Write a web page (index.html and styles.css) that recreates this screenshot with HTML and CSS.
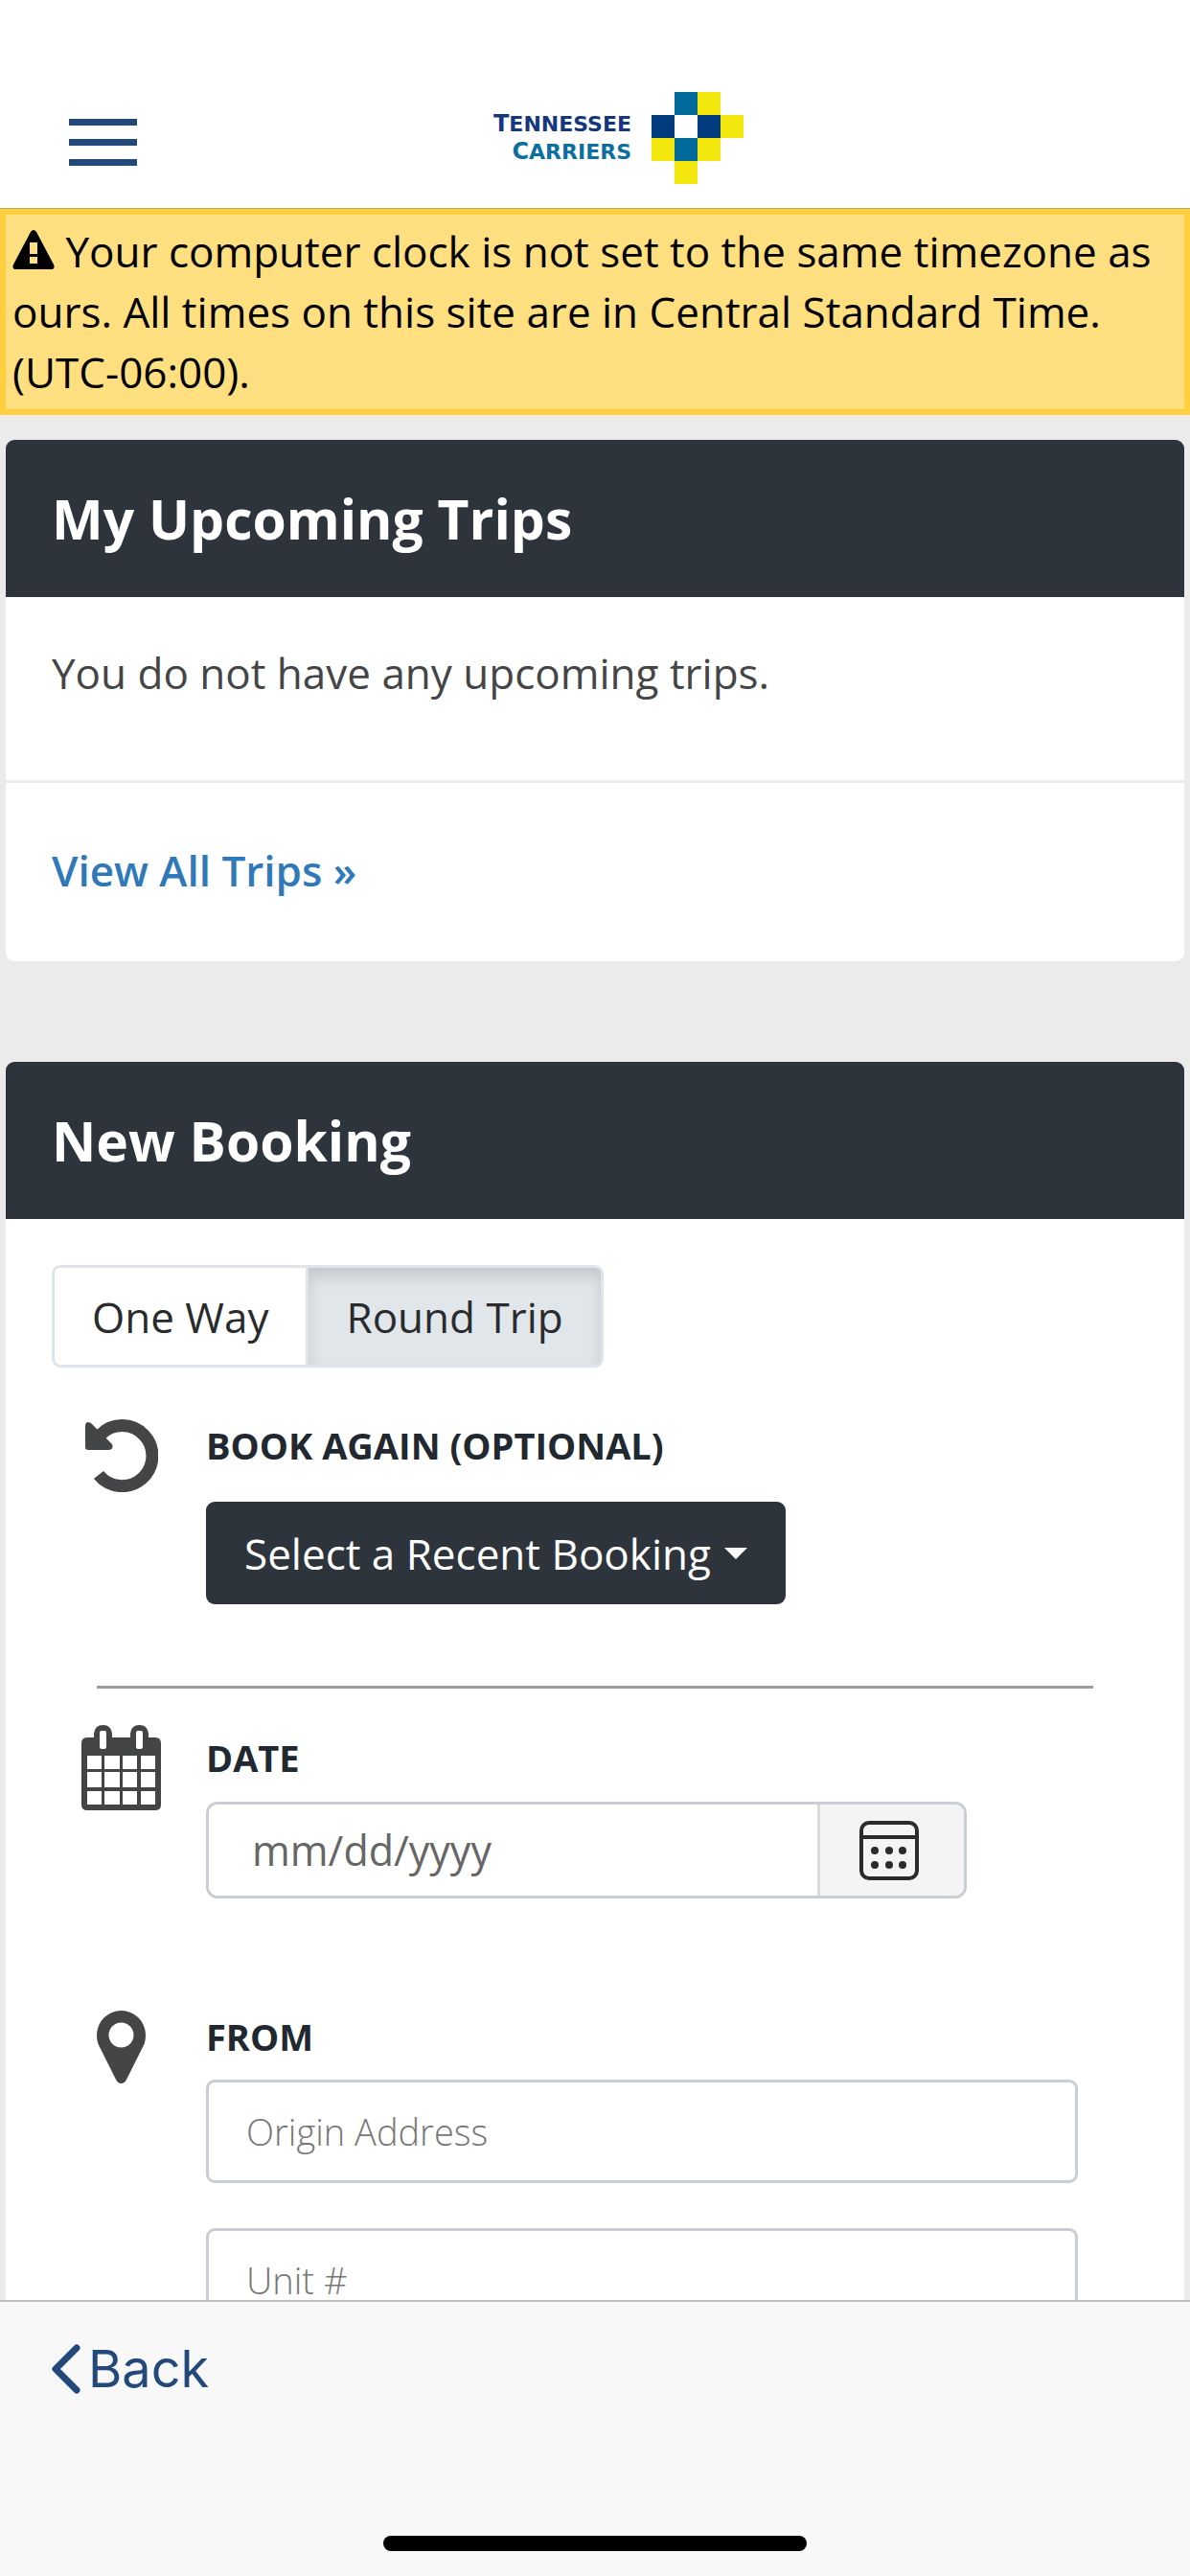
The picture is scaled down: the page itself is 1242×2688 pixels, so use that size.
FILE: index.html
```html
<!DOCTYPE html>
<html lang="en">

<head>
    <meta charset="UTF-8">
    <meta name="viewport" content="width=device-width, initial-scale=1.0">
    <title>Tennessee Carriers</title>
    <link rel="stylesheet" href="styles.css">
</head>

<body>
    <header class="topbar">
        <button class="menu-btn" type="button" aria-label="Menu">
            <span></span>
            <span></span>
            <span></span>
        </button>
        <a class="logo" href="#">
            <span class="logo-text">
                <span class="logo-line"><b>T</b>ENNESSEE</span>
                <span class="logo-line teal"><b>C</b>ARRIERS</span>
            </span>
            <svg class="logo-mark" viewBox="0 0 96 96" aria-hidden="true">
                <path fill="#f3e70d" d="M48 0h24v24H48zM72 24h24v24H72zM0 48h24v24H0zM48 48h24v24H48zM24 72h24v24H24z"/>
                <path fill="#006a9b" d="M24 0h24v24H24zM24 48h24v24H24z"/>
                <path fill="#003c7d" d="M0 24h24v24H0zM48 24h24v24H48z"/>
            </svg>
        </a>
    </header>

    <main class="content">
        <div class="alert">
            <svg class="alert-icon" viewBox="0 0 44 41" aria-hidden="true">
                <path fill-rule="evenodd" d="M19 2q3-4 6 0l18 34q2 5-3 5H4q-5 0-3-5zM18 13v12h8V13zM18 28v7h8v-7z"/>
            </svg>
            Your computer clock is not set to the same timezone as ours. All times on this site are in Central Standard Time. (UTC-06:00).
        </div>

        <section class="card">
            <h2 class="card-title">My Upcoming Trips</h2>
            <p class="card-text">You do not have any upcoming trips.</p>
            <div class="card-footer"><a href="#">View All Trips »</a></div>
        </section>

        <section class="card">
            <h2 class="card-title">New Booking</h2>
            <form class="booking">
                <div class="toggle">
                    <button type="button">One Way</button>
                    <button type="button" class="active">Round Trip</button>
                </div>

                <div class="row row-again">
                    <svg class="icon" width="76" height="76" viewBox="0 0 76 76" aria-hidden="true">
                        <path d="M16 16A31.500 31.500 0 1 1 14 58" fill="none" stroke="#444546" stroke-width="13"/>
                        <path d="M0 6q1-5 6-2l22 22q2 5-3 6H3q-3 0-3-3z" fill="#444546"/>
                    </svg>
                    <div class="field">
                        <label for="recent">Book Again (Optional)</label>
                        <button class="dropdown" id="recent" type="button">Select a Recent Booking<span class="caret"></span></button>
                    </div>
                </div>

                <hr>

                <div class="row row-date">
                    <svg class="icon" width="83" height="89" viewBox="0 0 83 89" aria-hidden="true">
                        <path fill="#444546" fill-rule="evenodd" d="M6 13h7v-4q1-9 9.500-9T32 9v4h19V9q1-9 9.500-9T70 9v4h7q6 0 6 6v64q0 6-6 6H6q-6 0-6-6V19q0-6 6-6zM19 8v15q0 2 2 2h3q2 0 2-2V8q0-2-2-2h-3q-2 0-2 2zM57 8v15q0 2 2 2h3q2 0 2-2V8q0-2-2-2h-3q-2 0-2 2zM6 32v14h15V32zM24 32v14h16V32zM43 32v14h15V32zM62 32v14h15V32zM6 49v16h15V49zM24 49v16h16V49zM43 49v16h15V49zM62 49v16h15V49zM6 69v14h15V69zM24 69v14h16V69zM43 69v14h15V69zM62 69v14h15V69z"/>
                    </svg>
                    <div class="field">
                        <label for="date">Date</label>
                        <div class="date-group">
                            <input id="date" type="text" placeholder="mm/dd/yyyy">
                            <button type="button" aria-label="Open calendar">
                                <svg width="62" height="62" viewBox="0 0 62 62" fill="none" stroke="#292b2c" stroke-width="4" aria-hidden="true">
                                    <rect x="2" y="2" width="58" height="58" rx="8"/>
                                    <path d="M2 17h58"/>
                                    <g fill="#292b2c" stroke="none">
                                        <circle cx="16" cy="31" r="4"/>
                                        <circle cx="31" cy="31" r="4"/>
                                        <circle cx="45" cy="31" r="4"/>
                                        <circle cx="16" cy="46" r="4"/>
                                        <circle cx="31" cy="46" r="4"/>
                                        <circle cx="45" cy="46" r="4"/>
                                    </g>
                                </svg>
                            </button>
                        </div>
                    </div>
                </div>

                <div class="row row-from">
                    <svg class="icon" width="51" height="76" viewBox="0 0 51 76" aria-hidden="true">
                        <path fill="#444546" fill-rule="evenodd" d="M25.500 0A25.500 25.500 0 0 1 51 25q0 7-2 11L31 72q-2 4-5.500 4T20 72L2 36Q0 32 0 25A25.500 25.500 0 0 1 25.500 0zM25.500 12.500a13 13 0 1 0 0 26a13 13 0 0 0 0-26z"/>
                    </svg>
                    <div class="field">
                        <label for="origin">From</label>
                        <input class="text-input" id="origin" type="text" placeholder="Origin Address">
                        <input class="text-input" type="text" placeholder="Unit #" aria-label="Unit number">
                    </div>
                </div>
            </form>
        </section>
    </main>

    <footer class="bottombar">
        <a class="back" href="#">
            <svg width="30" height="52" viewBox="0 0 30 52" aria-hidden="true">
                <path d="M26 4L4 26l22 22" fill="none" stroke="#23497a" stroke-width="7" stroke-linecap="round" stroke-linejoin="round"/>
            </svg>
            Back
        </a>
        <div class="home-indicator"></div>
    </footer>
</body>

</html>
```

FILE: styles.css
```css
* {
    box-sizing: border-box;
}

body {
    margin: 0;
    height: 100vh;
    display: flex;
    flex-direction: column;
    overflow: hidden;
    background-color: #ebebeb;
    font-family: "Open Sans", "Noto Sans", sans-serif;
    font-size: 44px;
    color: #444546;
}

button,
input {
    font-family: inherit;
    font-size: inherit;
}

/* top bar */
.topbar {
    flex: none;
    display: grid;
    grid-template-columns: 1fr auto 1fr;
    align-items: center;
    padding: 96px 72px 25px;
    background-color: #fff;
    border-bottom: 1px solid #c4a750;
}

.menu-btn {
    display: flex;
    flex-direction: column;
    gap: 14px;
    width: 71px;
    margin-top: 8px;
    padding: 0;
    border: none;
    background: none;
}

.menu-btn span {
    width: 100%;
    height: 7px;
    background-color: #23497a;
}

.logo {
    display: flex;
    align-items: center;
    gap: 21px;
    text-decoration: none;
}

.logo-text {
    display: flex;
    flex-direction: column;
    align-items: flex-end;
    min-width: 193px;
    font-family: "DejaVu Sans", Verdana, sans-serif;
    font-size: 22px;
    font-weight: bold;
    line-height: 28px;
    color: #14377d;
}

.logo-text b {
    font-size: 24px;
}

.logo-text .teal {
    color: #0d6ea0;
}

.logo-mark {
    width: 96px;
    height: 96px;
}

/* page content */
.content {
    flex: 1;
    min-height: 0;
    overflow: hidden;
}

.alert {
    padding: 7px;
    border: 6px solid #ffcf40;
    background-color: #ffdf80;
    color: #000;
    line-height: 63px;
}

.alert-icon {
    width: 44px;
    height: 41px;
    vertical-align: -2px;
}

.card {
    margin: 26px 6px 105px;
    border-radius: 9px;
    background-color: #fff;
    overflow: hidden;
}

.card-title {
    margin: 0;
    padding: 42px 48px;
    background-color: #2d343c;
    color: #fff;
    font-size: 57px;
    line-height: 80px;
}

.card-text {
    margin: 0;
    padding: 48px 48px 80px;
    line-height: 63px;
}

.card-footer {
    padding: 60px 48px 63px;
    border-top: 3px solid #ebebeb;
    line-height: 63px;
}

.card-footer a {
    color: #2f79b9;
    font-weight: 600;
    text-decoration: none;
}

/* booking form */
.booking {
    padding: 48px;
}

.toggle {
    display: flex;
}

.toggle button {
    height: 107px;
    padding: 0 39px;
    border: 3px solid #dfe4e8;
    border-radius: 9px 0 0 9px;
    background-color: #fff;
    color: #292b2c;
}

.toggle .active {
    border-left: none;
    border-radius: 0 9px 9px 0;
    background-color: #e1e6ea;
    box-shadow: inset 0 9px 15px rgba(0, 0, 0, 0.13);
}

.row {
    display: grid;
    grid-template-columns: 145px 1fr;
    column-gap: 16px;
    padding-right: 63px;
}

.icon {
    justify-self: center;
}

.field {
    display: flex;
    flex-direction: column;
    align-items: flex-start;
}

.field label {
    color: #212830;
    font-size: 38px;
    font-weight: 700;
    line-height: 54px;
    text-transform: uppercase;
}

.row-again {
    margin-top: 54px;
}

.dropdown {
    display: flex;
    align-items: center;
    gap: 14px;
    height: 107px;
    margin-top: 32px;
    padding: 0 40px;
    border: none;
    border-radius: 9px;
    background-color: #2d343c;
    color: #fff;
}

.caret {
    border: 12px solid transparent;
    border-top-color: #fff;
    border-bottom: none;
}

hr {
    height: 3px;
    margin: 85px 47px 0;
    border: none;
    background-color: #9b9c9d;
}

.row-date {
    margin-top: 38px;
}

.row-date .field {
    padding-top: 7px;
}

.date-group {
    display: flex;
    width: 794px;
    max-width: 100%;
    height: 101px;
    margin-top: 19px;
    border: 3px solid #c9cdd4;
    border-radius: 12px;
    overflow: hidden;
}

.date-group input {
    flex: 1;
    min-width: 0;
    padding: 0 45px;
    border: none;
    font-size: 43px;
}

.date-group button {
    width: 153px;
    padding: 0 6px 0 0;
    border: none;
    border-left: 3px solid #d9dadb;
    background-color: #f4f4f4;
    line-height: 0;
}

.date-group input::placeholder {
    color: #666;
}

.row-from {
    margin-top: 117px;
}

.text-input {
    width: 100%;
    height: 108px;
    margin-top: 18px;
    padding: 0 39px;
    border: 3px solid #c9cdd4;
    border-radius: 9px;
    font-size: 38px;
    font-weight: 300;
}

.text-input + .text-input {
    margin-top: 47px;
}

.text-input::placeholder {
    color: #777;
}

/* bottom bar */
.bottombar {
    flex: none;
    display: flex;
    flex-direction: column;
    justify-content: space-between;
    height: 288px;
    padding: 36px 54px 26px;
    border-top: 2px solid #bfbfbf;
    background-color: #f8f8f8;
}

.back {
    display: flex;
    align-items: center;
    gap: 8px;
    align-self: flex-start;
    color: #23497a;
    font-family: Inter, "Liberation Sans", sans-serif;
    font-size: 54px;
    line-height: 68px;
    text-decoration: none;
}

.home-indicator {
    align-self: center;
    width: 442px;
    height: 16px;
    border-radius: 8px;
    background-color: #000;
}
```
